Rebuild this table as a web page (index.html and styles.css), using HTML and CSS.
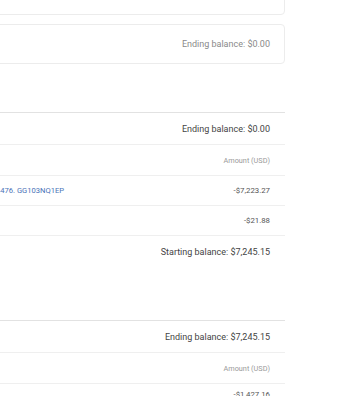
FILE: index.html
```html
<!DOCTYPE html>
<html lang="en">
<head>
  <meta charset="UTF-8">
  <meta name="viewport" content="width=device-width, initial-scale=1">
  <title>Account statement</title>
  <link rel="stylesheet" href="styles.css">
</head>
<body>
  <main class="statement">
    <section class="card card-top"></section>
    <section class="card">
      <div class="card-row">Ending balance: $0.00</div>
    </section>

    <section class="ledger">
      <div class="row balance">Ending balance: $0.00</div>
      <div class="row head">
        <span class="desc"></span>
        <span class="amount">Amount (USD)</span>
      </div>
      <div class="row">
        <a class="desc link" href="#">Invoice 4476. GG103NQ1EP</a>
        <span class="amount">-$7,223.27</span>
      </div>
      <div class="row">
        <span class="desc"></span>
        <span class="amount">-$21.88</span>
      </div>
      <div class="row balance last">Starting balance: $7,245.15</div>
    </section>

    <section class="ledger second">
      <div class="row balance">Ending balance: $7,245.15</div>
      <div class="row head">
        <span class="desc"></span>
        <span class="amount">Amount (USD)</span>
      </div>
      <div class="row tall">
        <span class="desc"></span>
        <span class="amount">-$1,427.16</span>
      </div>
    </section>
  </main>
</body>
</html>
```

FILE: styles.css
```css
* { box-sizing: border-box; margin: 0; padding: 0; }
body {
  font-family: Roboto, "Liberation Sans", sans-serif;
  background: #fff;
  color: #444;
  overflow: hidden;
}
.statement {
  width: 325px;
  margin-left: -40px;
  margin-top: -30px;
}
.card {
  border: 1px solid #ececec;
  border-radius: 4px;
  margin-bottom: 9px;
}
.card-top { height: 45px; }
.card-row {
  height: 38px;
  display: flex;
  align-items: center;
  justify-content: flex-end;
  padding-right: 14px;
  font-size: 9px;
  color: #8a8a8a;
}
.ledger {
  margin-top: 48px;
  border-top: 1px solid #e2e2e2;
}
.ledger.second { margin-top: 52px; }
.row {
  display: flex;
  justify-content: space-between;
  align-items: center;
  height: 30px;
  padding: 0 15px 0 10px;
  border-bottom: 1px solid #efefef;
}
.row.head { height: 31px; }
.row.tall {
  align-items: flex-start;
  padding-top: 6px;
}
.row.balance {
  justify-content: flex-end;
  height: 32px;
  font-size: 9px;
  color: #444;
}
.row.last { border-bottom: none; }
.head .amount {
  font-size: 7.3px;
  color: #9a9a9a;
}
.amount {
  font-size: 7.8px;
  color: #555;
}
.link {
  font-size: 7.6px;
  color: #4a72b8;
  text-decoration: none;
}
```
